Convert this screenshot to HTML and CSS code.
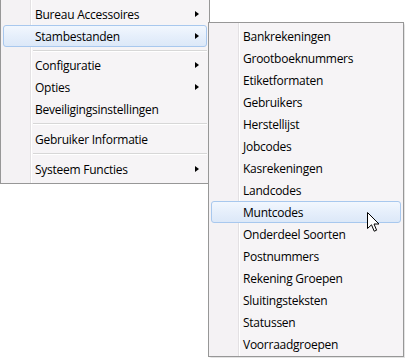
FILE: index.html
```html
<!DOCTYPE html>
<html>
  <head>
    <meta charset="utf-8">
    <title>Menu</title>
    <link rel="stylesheet" href="styles.css">
  </head>
  <body>
    <div class="desk">
      <!-- hoofdmenu -->
      <div class="menu main-menu">
        <div class="item sub"><span>Bureau Accessoires</span><i class="arrow"></i></div>
        <div class="item sub hover"><span>Stambestanden</span><i class="arrow"></i></div>
        <div class="sep sep-small"></div>
        <div class="item sub"><span>Configuratie</span><i class="arrow"></i></div>
        <div class="item sub"><span>Opties</span><i class="arrow"></i></div>
        <div class="item"><span>Beveiligingsinstellingen</span></div>
        <div class="sep"></div>
        <div class="item"><span>Gebruiker Informatie</span></div>
        <div class="sep"></div>
        <div class="item sub"><span>Systeem Functies</span><i class="arrow"></i></div>
      </div>

      <!-- submenu stambestanden -->
      <div class="menu sub-menu">
        <div class="item"><span>Bankrekeningen</span></div>
        <div class="item"><span>Grootboeknummers</span></div>
        <div class="item"><span>Etiketformaten</span></div>
        <div class="item"><span>Gebruikers</span></div>
        <div class="item"><span>Herstellijst</span></div>
        <div class="item"><span>Jobcodes</span></div>
        <div class="item"><span>Kasrekeningen</span></div>
        <div class="item"><span>Landcodes</span></div>
        <div class="item hover"><span>Muntcodes</span></div>
        <div class="item"><span>Onderdeel Soorten</span></div>
        <div class="item"><span>Postnummers</span></div>
        <div class="item"><span>Rekening Groepen</span></div>
        <div class="item"><span>Sluitingsteksten</span></div>
        <div class="item"><span>Statussen</span></div>
        <div class="item"><span>Voorraadgroepen</span></div>
      </div>

      <svg class="cursor" width="13" height="21" viewBox="0 0 13 21">
        <path d="M0.5 0.5 L0.5 16.5 L4.5 12.8 L7.2 19.2 L9.6 18.2 L7 12 L12 12 Z" fill="#fff" stroke="#000" stroke-width="1" stroke-linejoin="miter"/>
      </svg>
    </div>
  </body>
</html>
```

FILE: styles.css
```css
body {
  margin     : 0;
  background : #fff;
}
.desk {
  position : relative;
  width    : 405px;
  height   : 358px;
  overflow : hidden;
  font-family : "Open Sans", "Noto Sans", sans-serif;
  font-size   : 12px;
  color       : #000;
}

.menu {
  position   : absolute;
  box-sizing : border-box;
  display    : flex;
  flex-direction : column;
  border     : 1px solid #979797;
  background : linear-gradient(to right, #f4f2f4 0, #f4f2f4 29px, #e3e1e3 29px, #e3e1e3 30px, #fff 30px, #fff 31px, #f6f4f6 31px);
}
.main-menu {
  left   : 0;
  top    : 0;
  width  : 210px;
  border-top : 0;
  padding : 3px 2px 3px 2px;
}
.sub-menu {
  left   : 208px;
  top    : 22px;
  width  : 196px;
  height : 335px;
  padding : 2px 2px 0 2px;
  box-shadow : 2px 2px 2px rgba(0, 0, 0, 0.12);
}

.item {
  position   : relative;
  display    : flex;
  align-items: center;
  height     : 22px;
  flex       : none;
  box-sizing : border-box;
  padding-left : 31px;
  border     : 1px solid transparent;
  border-radius : 3px;
  letter-spacing : -0.25px;
}
.item.hover {
  border-color : #a8c8ee;
  background   : linear-gradient(to bottom, #f2f7fe 0%, #e6effb 50%, #dce8f8 100%);
}
.item span {
  flex : 1;
  white-space : nowrap;
}
.arrow {
  width  : 0;
  height : 0;
  margin-right : 7px;
  border-top    : 3.5px solid transparent;
  border-bottom : 3.5px solid transparent;
  border-left   : 4px solid #000;
}

.sep {
  flex   : none;
  height : 8px;
  margin-left : 30px;
  background : linear-gradient(to bottom, transparent 3px, #d7d7d7 3px, #d7d7d7 4px, #fff 4px, #fff 5px, transparent 5px);
}
.sep-small {
  height : 7px;
}

.cursor {
  position : absolute;
  left     : 367px;
  top      : 212px;
}
```
